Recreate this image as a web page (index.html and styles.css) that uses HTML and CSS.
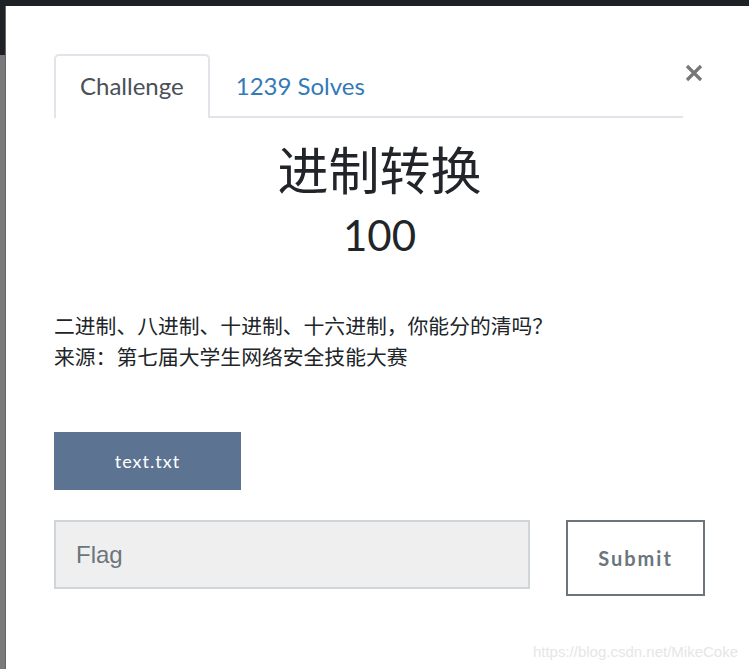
FILE: index.html
```html
<!DOCTYPE html>
<html lang="zh-CN">
<head>
    <meta charset="UTF-8">
    <meta name="viewport" content="width=device-width, initial-scale=1.0">
    <title>进制转换</title>
    <link rel="stylesheet" href="styles.css">
</head>
<body>

<div class="navbar"></div>

<div class="page">
    <div class="side"></div>

    <div class="modal">
        <div class="modal-header">
            <ul class="nav-tabs">
                <li class="tab active">Challenge</li>
                <li class="tab">1239 Solves</li>
            </ul>
            <button class="close" aria-label="Close">
                <svg width="18" height="18" viewBox="0 0 18 18">
                    <path d="M2 2 L16 16 M16 2 L2 16" stroke="#777" stroke-width="3.2" stroke-linecap="butt"/>
                </svg>
            </button>
        </div>

        <h2 class="challenge-name">进制转换</h2>
        <h3 class="challenge-value">100</h3>

        <div class="challenge-desc">
            <p>二进制、八进制、十进制、十六进制，你能分的清吗？</p>
            <p>来源：第七届大学生网络安全技能大赛</p>
        </div>

        <div class="files">
            <a class="file-btn" href="#">text.txt</a>
        </div>

        <form class="submit-row" onsubmit="return false;">
            <input type="text" class="flag-input" placeholder="Flag">
            <button type="submit" class="submit-btn">Submit</button>
        </form>

        <div class="watermark">https://blog.csdn.net/MikeCoke</div>
    </div>
</div>

</body>
</html>
```

FILE: styles.css
```css
html, body {
    height: 100%;
}

body {
    margin: 0;
    background: #7a7a7a;
    font-family: 'Lato', 'Noto Sans CJK SC', sans-serif;
    color: #212529;
    display: flex;
    flex-direction: column;
    overflow: hidden;
}

.navbar {
    height: 6px;
    background: #1e2125;
    flex-shrink: 0;
}

.page {
    flex: 1;
    display: flex;
}

.side {
    width: 6px;
    background: linear-gradient(#1e2125 0, #1e2125 49px, #7a7a7a 49px);
    border-right: 1px solid #666;
    box-sizing: border-box;
}

.modal {
    flex: 1;
    position: relative;
    background: #fff;
    padding: 48px 44px 0 48px;
}

.modal-header {
    display: flex;
    align-items: flex-start;
}

.nav-tabs {
    flex: 1;
    display: flex;
    list-style: none;
    margin: 0 1px 0 0;
    padding: 0;
    border-bottom: 2px solid #e1e5e9;
}

.tab {
    padding: 0 24px;
    height: 60px;
    line-height: 60px;
    font-size: 24px;
    color: #337ab7;
    border: 2px solid transparent;
    border-bottom: none;
    margin-bottom: -2px;
    border-radius: 5px 5px 0 0;
}

.tab.active {
    color: #495057;
    background: #fff;
    border-color: #e1e5e9;
    height: 62px;
}

.close {
    border: none;
    background: none;
    padding: 0;
    margin: 10px 2px 0 0;
    width: 19px;
    height: 19px;
    cursor: pointer;
}

.challenge-name {
    margin: 18px 0 0;
    text-align: center;
    font-family: 'Noto Sans CJK SC', sans-serif;
    font-weight: 400;
    font-size: 51px;
    line-height: 64px;
}

.challenge-value {
    margin: 8px 0 0;
    text-align: center;
    font-weight: 400;
    font-size: 42px;
    line-height: 54px;
}

.challenge-desc {
    margin-top: 48px;
    font-family: 'Noto Sans CJK SC', sans-serif;
    font-size: 20.8px;
    line-height: 31px;
}

.challenge-desc p {
    margin: 0;
}

.files {
    margin-top: 60px;
}

.file-btn {
    display: inline-block;
    width: 187px;
    height: 58px;
    line-height: 58px;
    text-align: center;
    background: #5c7391;
    color: #fff;
    text-decoration: none;
    font-size: 18px;
    letter-spacing: 1px;
}

.submit-row {
    margin-top: 30px;
    display: flex;
    align-items: flex-start;
    gap: 36px;
}

.flag-input {
    width: 476px;
    height: 69px;
    box-sizing: border-box;
    border: 2px solid #d0d5da;
    background: #efefef;
    padding: 0 20px;
    font-family: 'Liberation Sans', Arial, sans-serif;
    font-size: 24px;
    color: #495057;
    outline: none;
}

.flag-input::placeholder {
    color: #6c757d;
}

.submit-btn {
    width: 139px;
    height: 76px;
    box-sizing: border-box;
    border: 2px solid #6c757d;
    background: #fff;
    color: #6c757d;
    font-family: 'Lato', sans-serif;
    font-weight: 700;
    font-size: 20px;
    letter-spacing: 2px;
    cursor: pointer;
}

.watermark {
    position: absolute;
    right: 11px;
    bottom: 9px;
    font-family: 'Liberation Sans', Arial, sans-serif;
    font-size: 15px;
    color: #e6e6e6;
}
```
